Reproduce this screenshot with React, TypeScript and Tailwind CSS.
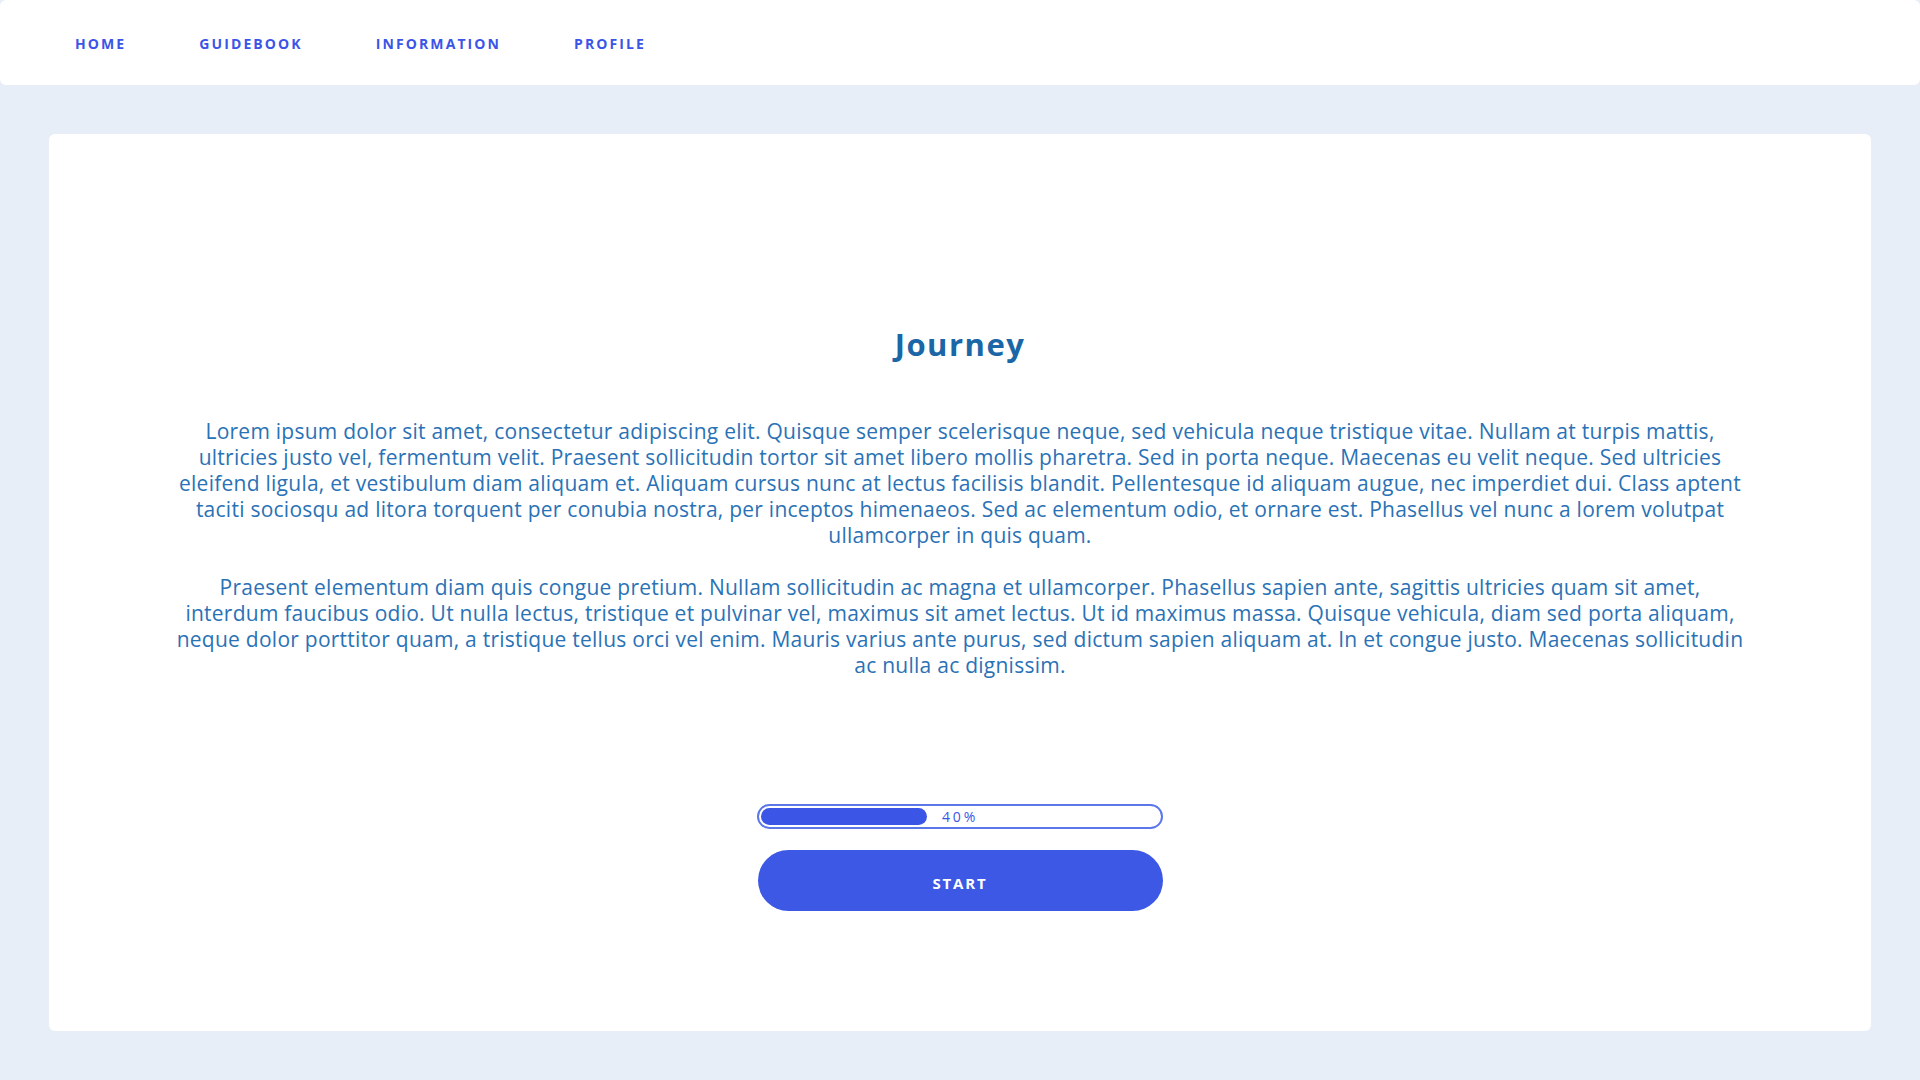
import React from 'react';

const navLinks = ['Home', 'Guidebook', 'Information', 'Profile'];

const paragraphs = [
  'Lorem ipsum dolor sit amet, consectetur adipiscing elit. Quisque semper scelerisque neque, sed vehicula neque tristique vitae. Nullam at turpis mattis, ultricies justo vel, fermentum velit. Praesent sollicitudin tortor sit amet libero mollis pharetra. Sed in porta neque. Maecenas eu velit neque. Sed ultricies eleifend ligula, et vestibulum diam aliquam et. Aliquam cursus nunc at lectus facilisis blandit. Pellentesque id aliquam augue, nec imperdiet dui. Class aptent taciti sociosqu ad litora torquent per conubia nostra, per inceptos himenaeos. Sed ac elementum odio, et ornare est. Phasellus vel nunc a lorem volutpat ullamcorper in quis quam.',
  'Praesent elementum diam quis congue pretium. Nullam sollicitudin ac magna et ullamcorper. Phasellus sapien ante, sagittis ultricies quam sit amet, interdum faucibus odio. Ut nulla lectus, tristique et pulvinar vel, maximus sit amet lectus. Ut id maximus massa. Quisque vehicula, diam sed porta aliquam, neque dolor porttitor quam, a tristique tellus orci vel enim. Mauris varius ante purus, sed dictum sapien aliquam at. In et congue justo. Maecenas sollicitudin ac nulla ac dignissim.',
];

function App() {
  const progress = 40;

  return (
    <div className="min-h-screen bg-[#e8eef7] pb-[49px] font-['Open_Sans',sans-serif]">
      <nav className="h-[85px] bg-white rounded-md flex items-center pl-[75px] gap-[73px] pt-[2px]">
        {navLinks.map((link) => (
          <a
            key={link}
            href="#"
            className="text-[14px] font-bold uppercase tracking-[0.15em] text-[#3b55e6]"
          >
            {link}
          </a>
        ))}
      </nav>

      <main className="mt-[49px] mx-[49px] h-[897px] bg-white rounded-md flex flex-col items-center pt-[192px]">
        <h1 className="text-[31px] leading-[36px] font-bold tracking-[1.5px] text-[#1a66a6]">Journey</h1>

        <div className="mt-[56px] w-full px-[123px] space-y-[26px]">
          {paragraphs.map((text, i) => (
            <p key={i} className="text-center text-[21px] leading-[26px] tracking-[0.25px] text-[#2a72b5]">
              {text}
            </p>
          ))}
        </div>

        <div className="mt-[126px] relative w-[406px] h-[25px] rounded-full border-2 border-[#5b77e8] p-[2px]">
          <div
            className="h-full rounded-full bg-[#3b55e6]"
            style={{ width: `calc(${progress}% + 7px)` }}
          />
          <span className="absolute inset-0 flex items-center justify-center text-[14px] tracking-[0.2em] text-[#3b55e6]">
            {progress}%
          </span>
        </div>

        <button className="mt-[21px] w-[405px] h-[61px] rounded-full bg-[#3c58e4] text-white text-[15px] font-bold uppercase tracking-[0.12em] pt-[6px]">
          Start
        </button>
      </main>
    </div>
  );
}

export default App;
